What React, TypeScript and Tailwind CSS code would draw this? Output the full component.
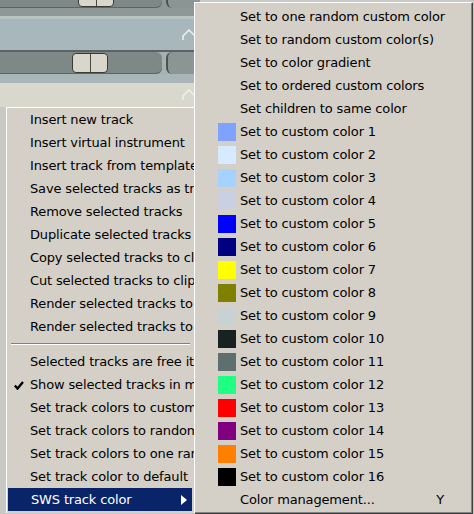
import React from "react"

const leftTop = [
  "Insert new track",
  "Insert virtual instrument",
  "Insert track from template",
  "Save selected tracks as track template...",
  "Remove selected tracks",
  "Duplicate selected tracks",
  "Copy selected tracks to clipboard",
  "Cut selected tracks to clipboard",
  "Render selected tracks to stereo stem tracks",
  "Render selected tracks to mono stem tracks",
]

const leftBottom = [
  { label: "Selected tracks are free item positioning", check: false },
  { label: "Show selected tracks in mixer", check: true },
  { label: "Set track colors to custom color...", check: false },
  { label: "Set track colors to random colors", check: false },
  { label: "Set track colors to one random color", check: false },
  { label: "Set track color to default", check: false },
]

const plain = [
  "Set to one random custom color",
  "Set to random custom color(s)",
  "Set to color gradient",
  "Set to ordered custom colors",
  "Set children to same color",
]

const swatches = [
  "#80a2ff", "#d6ebff", "#a6d2ff", "#c8d0e2",
  "#0000ff", "#000080", "#ffff00", "#808000",
  "#c9d2d2", "#172320", "#5f6f70", "#1fff82",
  "#ff0000", "#800080", "#ff8000", "#000000",
]

function Slider({ knob }: { knob: number }) {
  return (
    <div className="flex h-full items-center">
      <div className="relative h-full w-[162px] rounded-r-md bg-[#7e8886] shadow-[inset_0_-1px_0_#5c6462]">
        <div
          className="absolute top-[1px] bottom-[1px] w-[36px] rounded-[4px] border border-[#3a3a36] bg-[#d9d6cb] flex justify-center"
          style={{ left: knob }}
        >
          <div className="w-px h-full bg-[#4a4a44]" />
        </div>
      </div>
      <div className="ml-[4px] h-full w-[30px] rounded-l-md border-l-2 border-[#4b5250] bg-[#8b9593]" />
    </div>
  )
}

function Caret() {
  return (
    <svg width="14" height="12" viewBox="0 0 14 12" className="ml-auto mr-[4px]">
      <path d="M1 11 V7 L7 1 L13 7 V11" fill="none" stroke="#eef0ee" strokeWidth="1.5" />
    </svg>
  )
}

export default function App() {
  return (
    <div
      className="relative w-[474px] h-[514px] overflow-hidden bg-[#c9cac6] text-[13px] tracking-[-0.15px] text-black"
      style={{ fontFamily: '"DejaVu Sans", Verdana, sans-serif' }}
    >
      {/* track panel behind the menus */}
      <div className="flex flex-col w-[200px]">
        <div className="h-[16px] bg-[#8e9896]">
          <div className="h-full -mt-[8px]">
            <Slider knob={78} />
          </div>
        </div>
        <div className="h-[3px] bg-[#b9c4c5]" />
        <div className="h-[31px] flex items-center bg-[#a7b7bb]">
          <Caret />
        </div>
        <div className="h-[2px] bg-[#5b6462]" />
        <div className="h-[22px] bg-[#a4b2b4]">
          <Slider knob={72} />
        </div>
        <div className="h-[9px] bg-[#a9b6b7]" />
        <div className="h-[24px] flex items-center bg-[#d9d8cc]">
          <Caret />
        </div>
        <div className="h-[407px] bg-[#c8c9c4]" />
      </div>

      {/* main context menu, cut off by the submenu */}
      <div className="absolute left-[6px] top-[107px] w-[188px] h-[406px] overflow-hidden bg-[#d4d0c8] border-l border-t border-white">
        {leftTop.map((t) => (
          <div key={t} className="h-[23px] flex items-center pl-[23px] whitespace-nowrap">
            {t}
          </div>
        ))}
        <div className="h-[12px] flex flex-col justify-center px-[4px]">
          <div className="h-px bg-[#808080]" />
          <div className="h-px bg-white" />
        </div>
        {leftBottom.map((r) => (
          <div key={r.label} className="relative h-[23px] flex items-center pl-[23px] whitespace-nowrap">
            {r.check && (
              <svg width="10" height="9" viewBox="0 0 10 9" className="absolute left-[7px] top-[8px]">
                <path d="M0.8 4.5 L3.5 7.6 L9 1" fill="none" stroke="#000" strokeWidth="2.3" />
              </svg>
            )}
            {r.label}
          </div>
        ))}
        <div className="relative h-[23px] flex items-center pl-[23px] mr-[2px] ml-[1px] bg-[#0a246a] text-white whitespace-nowrap">
          SWS track color
          <svg width="6" height="10" viewBox="0 0 6 10" className="absolute right-[5px] top-[7px]">
            <path d="M0 0 L6 5 L0 10 Z" fill="#fff" />
          </svg>
        </div>
      </div>

      {/* SWS submenu */}
      <div className="absolute left-[194px] top-[2px] w-[278px] h-[511px] bg-[#d4d0c8] border-l border-t border-white shadow-[inset_-1px_-1px_0_#808080,1px_1px_0_#404040]">
        <div className="pt-[2px]">
          {plain.map((t) => (
            <div key={t} className="h-[23px] flex items-center pl-[45px] whitespace-nowrap">
              {t}
            </div>
          ))}
          {swatches.map((c, i) => (
            <div key={c + i} className="h-[23px] flex items-center pl-[23px] whitespace-nowrap">
              <div className="w-[18px] h-[18px] mr-[4px] shrink-0" style={{ backgroundColor: c }} />
              <span>{`Set to custom color ${i + 1}`}</span>
            </div>
          ))}
          <div className="h-[23px] flex items-center pl-[45px] pr-[28px] whitespace-nowrap">
            <span>Color management...</span>
            <span className="ml-auto">Y</span>
          </div>
        </div>
      </div>
    </div>
  )
}
